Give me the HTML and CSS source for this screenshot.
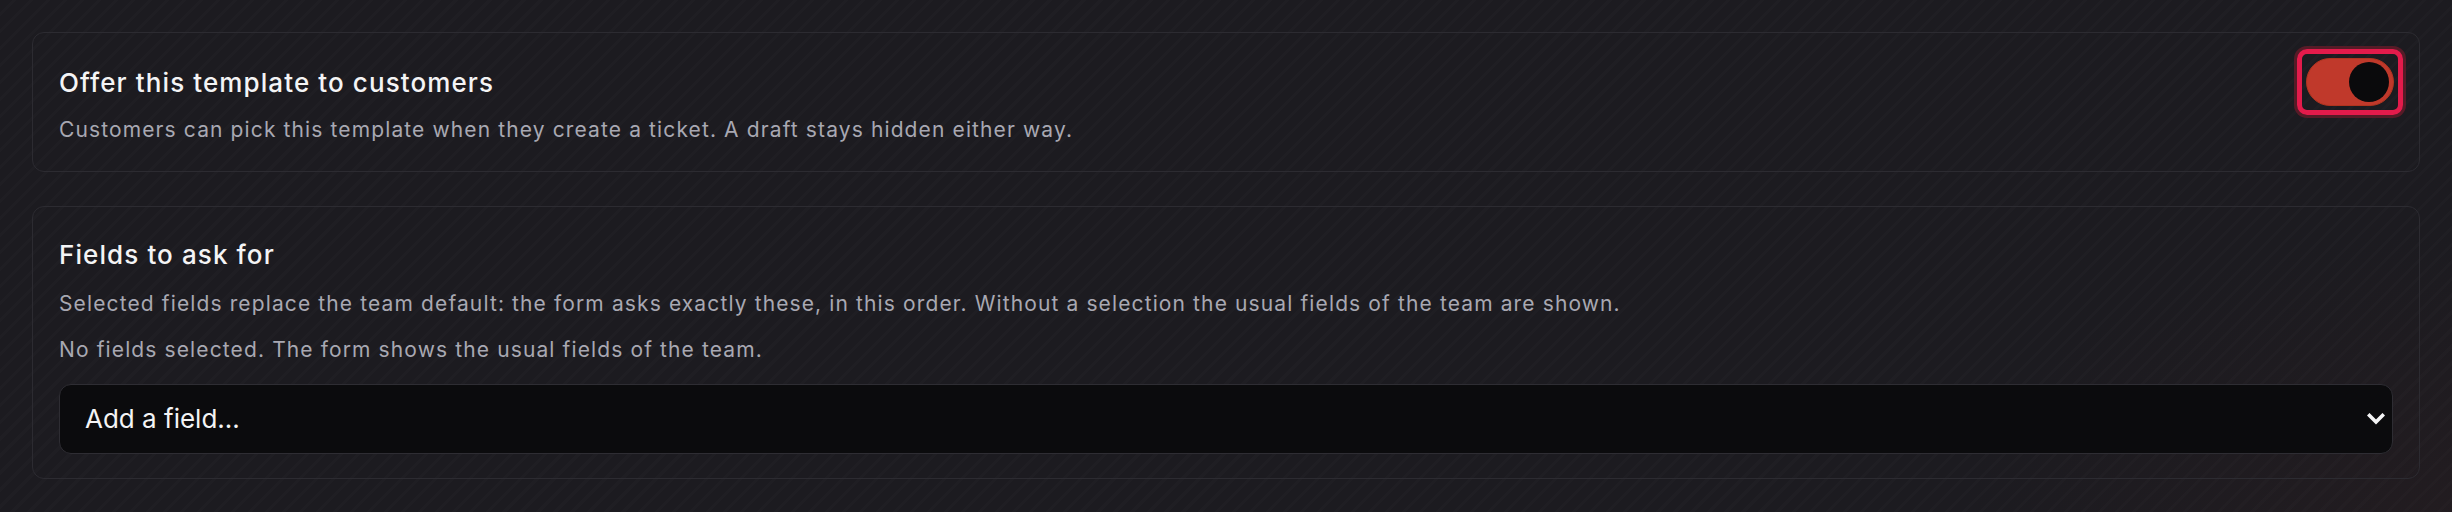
FILE: index.html
```html
<!DOCTYPE html>
<html lang="en">
<head>
<meta charset="utf-8">
<title>Template settings</title>
<link rel="stylesheet" href="styles.css">
</head>
<body>
<main class="page">
  <section class="card card-toggle">
    <div class="card-text">
      <h2 class="card-title">Offer this template to customers</h2>
      <p class="card-desc card-desc-first">Customers can pick this template when they create a ticket. A draft stays hidden either way.</p>
    </div>
    <span class="focus-ring">
      <button class="switch" type="button" role="switch" aria-checked="true" aria-label="Offer this template to customers"><span class="knob"></span></button>
    </span>
  </section>

  <section class="card card-fields">
    <h2 class="card-title">Fields to ask for</h2>
    <p class="card-desc card-desc-first">Selected fields replace the team default: the form asks exactly these, in this order. Without a selection the usual fields of the team are shown.</p>
    <p class="card-desc card-desc-next">No fields selected. The form shows the usual fields of the team.</p>
    <div class="select-wrap">
      <select class="select" aria-label="Add a field">
        <option>Add a field...</option>
      </select>
      <svg class="chevron" width="18" height="12" viewBox="0 0 18 12" aria-hidden="true">
        <polyline points="2.5,2.5 9,9 15.5,2.5" fill="none" stroke="#f4f4f5" stroke-width="3.6" stroke-linecap="square" stroke-linejoin="miter"/>
      </svg>
    </div>
  </section>
</main>
</body>
</html>
```

FILE: styles.css
```css
* {
  box-sizing: border-box;
}

html,
body {
  margin: 0;
  padding: 0;
}

body {
  width: 2452px;
  height: 512px;
  overflow: hidden;
  font-family: "Inter", "Noto Sans", sans-serif;
  color: #f4f4f5;
  background-color: #1c1b20;
  background-image:
    radial-gradient(ellipse 700px 400px at 100% 100%, rgba(60, 32, 32, 0.18), rgba(60, 32, 32, 0) 70%),
    repeating-linear-gradient(135deg, #1c1b20 0px, #1c1b20 9px, #1f1e23 9px, #1f1e23 12px);
}

.page {
  display: flex;
  flex-direction: column;
  gap: 34px;
  padding: 32px;
}

.card {
  border: 1px solid #2c2b31;
  border-radius: 12px;
}

.card-toggle {
  display: flex;
  justify-content: space-between;
  align-items: flex-start;
  padding: 32px 26px 25px;
}

.card-fields {
  display: flex;
  flex-direction: column;
  padding: 30px 26px 24px;
}

.card-title {
  margin: 0;
  font-size: 26px;
  line-height: 35px;
  font-weight: 500;
  letter-spacing: 1.1px;
  color: #f4f4f5;
}

.card-desc {
  margin: 0;
  font-size: 21px;
  line-height: 31.5px;
  font-weight: 400;
  letter-spacing: 1.12px;
  color: #a8a8b2;
}

.card-desc-first {
  margin-top: 14px;
}

.card-fields .card-desc-first {
  margin-top: 16px;
}

.card-desc-next {
  margin-top: 15px;
}

.focus-ring {
  display: inline-flex;
  margin-top: -16px;
  margin-right: -10px;
  padding: 4px;
  border: 5px solid #e31b4b;
  border-radius: 10px;
  box-shadow: 0 0 0 3px #561b27;
}

.switch {
  display: flex;
  align-items: center;
  justify-content: flex-end;
  width: 88px;
  height: 48px;
  padding: 0 4px;
  margin: 0;
  border: 1px solid #b0341f;
  border-radius: 24px;
  background: #c0392b;
  cursor: pointer;
}

.knob {
  display: block;
  width: 40px;
  height: 40px;
  border-radius: 50%;
  background: #0a0a0c;
}

.select-wrap {
  position: relative;
  margin-top: 18px;
}

.select {
  display: block;
  width: 100%;
  height: 70px;
  padding: 0 50px 0 25px;
  border: 1px solid #2e2d33;
  border-radius: 12px;
  background: #0b0b0d;
  color: #f4f4f5;
  font-family: "Inter", "Noto Sans", sans-serif;
  font-size: 26px;
  font-weight: 400;
  appearance: none;
  -webkit-appearance: none;
  outline: none;
}

.chevron {
  position: absolute;
  right: 8px;
  top: 29px;
  pointer-events: none;
}
```
